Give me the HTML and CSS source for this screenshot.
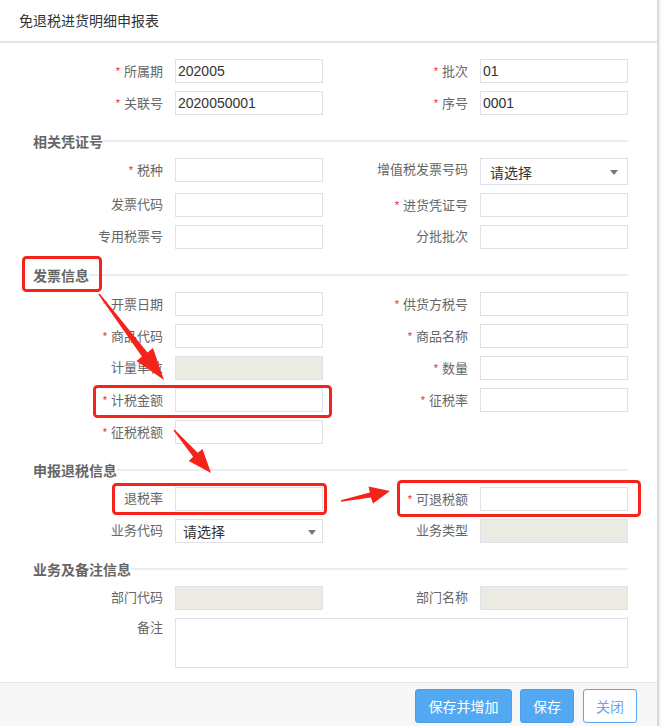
FILE: index.html
```html
<!DOCTYPE html>
<html lang="zh">
<head>
<meta charset="utf-8">
<title>免退税进货明细申报表</title>
<link rel="stylesheet" href="styles.css">
</head>
<body>
<div class="page">
  <div class="header">免退税进货明细申报表</div>
  <div class="body">
    <div class="grid">
      <div class="lbl"><span class="req">*</span>所属期</div>
      <div class="inp">202005</div>
      <div class="lbl"><span class="req">*</span>批次</div>
      <div class="inp">01</div>
      <div class="lbl"><span class="req">*</span>关联号</div>
      <div class="inp">2020050001</div>
      <div class="lbl"><span class="req">*</span>序号</div>
      <div class="inp">0001</div>
    </div>

    <div class="sec"><span class="sec-t">相关凭证号</span><span class="sec-l"></span></div>
    <div class="grid">
      <div class="lbl"><span class="req">*</span>税种</div>
      <div class="inp"></div>
      <div class="lbl">增值税发票号码</div>
      <div class="sel tall"><span>请选择</span><i class="caret"></i></div>
      <div class="lbl">发票代码</div>
      <div class="inp"></div>
      <div class="lbl"><span class="req">*</span>进货凭证号</div>
      <div class="inp"></div>
      <div class="lbl">专用税票号</div>
      <div class="inp"></div>
      <div class="lbl">分批批次</div>
      <div class="inp"></div>
    </div>

    <div class="sec"><span class="sec-t">发票信息</span><span class="sec-l"></span></div>
    <div class="grid">
      <div class="lbl"><span class="req">*</span>开票日期</div>
      <div class="inp"></div>
      <div class="lbl"><span class="req">*</span>供货方税号</div>
      <div class="inp"></div>
      <div class="lbl"><span class="req">*</span>商品代码</div>
      <div class="inp"></div>
      <div class="lbl"><span class="req">*</span>商品名称</div>
      <div class="inp"></div>
      <div class="lbl">计量单位</div>
      <div class="inp dis"></div>
      <div class="lbl"><span class="req">*</span>数量</div>
      <div class="inp"></div>
      <div class="lbl"><span class="req">*</span>计税金额</div>
      <div class="inp"></div>
      <div class="lbl"><span class="req">*</span>征税率</div>
      <div class="inp"></div>
      <div class="lbl"><span class="req">*</span>征税税额</div>
      <div class="inp"></div>
    </div>

    <div class="sec"><span class="sec-t">申报退税信息</span><span class="sec-l"></span></div>
    <div class="grid">
      <div class="lbl">退税率</div>
      <div class="inp"></div>
      <div class="lbl"><span class="req">*</span>可退税额</div>
      <div class="inp"></div>
      <div class="lbl">业务代码</div>
      <div class="sel small"><span>请选择</span><i class="caret"></i></div>
      <div class="lbl">业务类型</div>
      <div class="inp dis"></div>
    </div>

    <div class="sec"><span class="sec-t">业务及备注信息</span><span class="sec-l"></span></div>
    <div class="grid">
      <div class="lbl">部门代码</div>
      <div class="inp dis"></div>
      <div class="lbl">部门名称</div>
      <div class="inp dis"></div>
      <div class="lbl top">备注</div>
      <div class="area"></div>
    </div>
  </div>
  <div class="footer">
    <button class="btn primary wide">保存并增加</button>
    <button class="btn primary">保存</button>
    <button class="btn plain">关闭</button>
  </div>

  <svg class="marks" width="661" height="726" viewBox="0 0 661 726">
    <g fill="none" stroke="#f5241b" stroke-width="3">
      <rect x="23.5" y="257.5" width="77" height="33" rx="3"/>
      <rect x="94.5" y="386.5" width="236" height="30" rx="3"/>
      <rect x="113.5" y="484.5" width="212" height="29" rx="3"/>
      <rect x="398.5" y="481.5" width="241" height="34" rx="3"/>
    </g>
    <g fill="#f5241b">
      <polygon points="98.4,294.4 141.9,356.6 136.5,361 164,380 153,348 147.5,352.4 99.6,293.6"/>
      <polygon points="173.5,430.5 193.1,456.8 188.8,461 211,473 202.5,449 197.7,452.8 174.5,429.5"/>
      <polygon points="341.2,501.8 370.9,497.5 373,503.5 390,491 368.5,486.5 369.9,492.5 340.8,500.2"/>
    </g>
  </svg>
</div>
</body>
</html>
```

FILE: styles.css
```css
html, body {
  margin: 0;
  padding: 0;
  overflow: hidden;
  background: #f4f4f4;
}

.page {
  position: relative;
  width: 657px;
  height: 726px;
  background: #fff;
  border-right: 2px solid #d9d9d9;
  font-family: "Liberation Sans", "Noto Sans CJK SC", sans-serif;
  display: flex;
  flex-direction: column;
}

.header {
  height: 41px;
  line-height: 42px;
  padding-left: 19px;
  font-size: 14px;
  color: #333;
  border-bottom: 2px solid #e4e4ec;
}

.body {
  padding: 16px 0 13px 0;
  flex: 1;
}

.grid {
  display: grid;
  grid-template-columns: 175px 148px 157px 148px;
  row-gap: 8px;
  align-items: start;
}

.lbl {
  text-align: right;
  padding-right: 12px;
  font-size: 13px;
  color: #666;
  white-space: nowrap;
  line-height: 24px;
  height: 24px;
}

.lbl.top {
  line-height: 20px;
}

.req {
  color: #f0242a;
  font-size: 11px;
  margin-right: 4px;
  vertical-align: 1px;
}

.inp {
  box-sizing: border-box;
  height: 24px;
  border: 1px solid #dfe0e8;
  background: #fff;
  font-size: 14px;
  line-height: 22px;
  color: #333;
  padding: 0 2px;
}

.inp.dis {
  background: #ebebe4;
}

.sel {
  box-sizing: border-box;
  border: 1px solid #dfe0e8;
  background: #fff;
  color: #333;
  display: flex;
  align-items: center;
  justify-content: space-between;
}

.sel.tall {
  height: 27px;
  font-size: 14px;
  padding: 0 9px 0 9px;
}

.sel.small {
  height: 24px;
  font-size: 14px;
  padding: 0 6px 0 7px;
}

.caret {
  width: 0;
  height: 0;
  border-left: 4px solid transparent;
  border-right: 4px solid transparent;
  border-top: 5px solid #777;
  margin-top: 2px;
}

.area {
  grid-column: 2 / 5;
  box-sizing: border-box;
  height: 50px;
  border: 1px solid #dfe0e8;
  background: #fff;
}

.sec {
  display: flex;
  align-items: center;
  height: 18px;
  margin: 17px 0 8px 0;
  width: 628px;
  padding-left: 33px;
  box-sizing: border-box;
}

.sec-t {
  font-size: 14px;
  font-weight: bold;
  color: #666;
  white-space: nowrap;
}

.sec-l {
  flex: 1;
  height: 2px;
  background: #ededf1;
}

.footer {
  height: 44px;
  border-top: 1px solid #e6e6e6;
  background: #f7f7f7;
  display: flex;
  justify-content: flex-end;
  align-items: flex-start;
  gap: 8px;
  padding: 6px 20px 0 0;
  box-sizing: border-box;
}

.btn {
  height: 34px;
  box-sizing: border-box;
  font-family: "Liberation Sans", "Noto Sans CJK SC", sans-serif;
  font-size: 14px;
  border-radius: 3px;
  padding: 0;
  width: 54px;
  cursor: pointer;
}

.btn.wide {
  width: 97px;
}

.btn.primary {
  background: #52a9f2;
  border: 1px solid #4a9fe8;
  color: #fff;
}

.btn.plain {
  background: #fff;
  border: 1px solid #5aa8ef;
  color: #6aa6e6;
  margin-left: 1px;
}

.marks {
  position: absolute;
  left: 0;
  top: 0;
  pointer-events: none;
}
```
